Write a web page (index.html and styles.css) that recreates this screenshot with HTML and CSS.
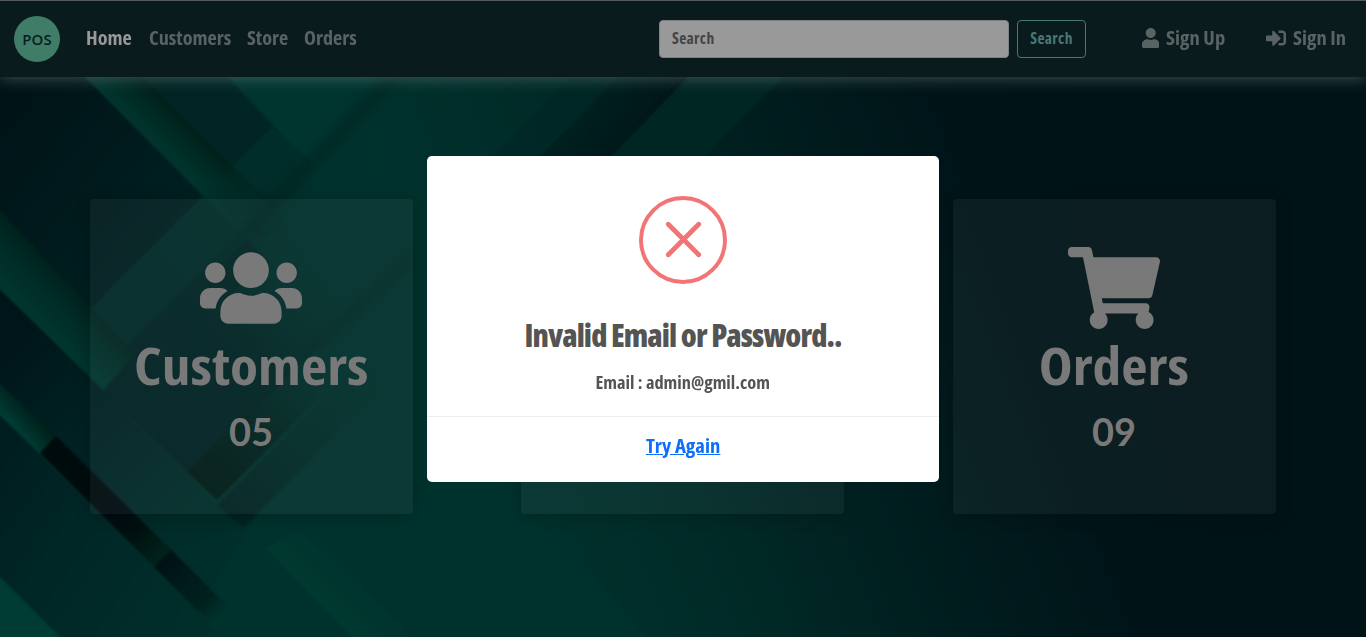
FILE: index.html
```html
<!DOCTYPE html>
<html lang="en">
<head>
<meta charset="utf-8">
<title>POS</title>
<link rel="stylesheet" href="styles.css">
</head>
<body>
<svg class="backdrop" viewBox="0 0 1366 637" preserveAspectRatio="none" aria-hidden="true">
  <defs>
    <linearGradient id="base" gradientUnits="userSpaceOnUse" x1="0" y1="0" x2="936" y2="-351">
      <stop offset="0" stop-color="#002f2b"/><stop offset=".3" stop-color="#00322d"/><stop offset=".4" stop-color="#002e2a"/><stop offset=".5" stop-color="#002926"/><stop offset=".66" stop-color="#001e1f"/><stop offset=".83" stop-color="#001519"/><stop offset="1" stop-color="#001317"/>
    </linearGradient>
    <linearGradient id="corner" gradientUnits="userSpaceOnUse" x1="0" y1="90" x2="190" y2="240">
      <stop offset="0" stop-color="#001317"/><stop offset="1" stop-color="#002122"/>
    </linearGradient>
    <linearGradient id="ray" gradientUnits="userSpaceOnUse" x1="140" y1="132" x2="172" y2="100">
      <stop offset="0" stop-color="#00352e"/><stop offset=".5" stop-color="#002a24"/><stop offset=".9" stop-color="#00201a"/><stop offset="1" stop-color="#002321"/>
    </linearGradient>
    <linearGradient id="rayend" gradientUnits="userSpaceOnUse" x1="190" y1="190" x2="240" y2="240">
      <stop offset="0" stop-color="#002e2a" stop-opacity="0"/><stop offset="1" stop-color="#002e2a"/>
    </linearGradient>
    <linearGradient id="band" gradientUnits="userSpaceOnUse" x1="50" y1="338" x2="94" y2="294">
      <stop offset="0" stop-color="#00372f"/><stop offset=".6" stop-color="#002924"/><stop offset="1" stop-color="#001d18"/>
    </linearGradient>
    <linearGradient id="band2" gradientUnits="userSpaceOnUse" x1="20" y1="434" x2="38" y2="418">
      <stop offset="0" stop-color="#003c33"/><stop offset="1" stop-color="#001f1a"/>
    </linearGradient>
    <linearGradient id="pit" gradientUnits="userSpaceOnUse" x1="0" y1="350" x2="180" y2="520">
      <stop offset="0" stop-color="#001519"/><stop offset=".4" stop-color="#002022"/><stop offset="1" stop-color="#002c29"/>
    </linearGradient>
    <linearGradient id="floor" gradientUnits="userSpaceOnUse" x1="0" y1="440" x2="240" y2="600">
      <stop offset="0" stop-color="#001d20"/><stop offset=".4" stop-color="#002726"/><stop offset="1" stop-color="#00302c"/>
    </linearGradient>
    <linearGradient id="bar" gradientUnits="userSpaceOnUse" x1="48" y1="445" x2="217" y2="614">
      <stop offset="0" stop-color="#000b0d"/><stop offset=".46" stop-color="#000d11"/><stop offset=".52" stop-color="#00110f"/><stop offset=".67" stop-color="#00231b"/><stop offset=".68" stop-color="#001114"/><stop offset=".8" stop-color="#001a1b"/><stop offset=".93" stop-color="#00221d"/><stop offset="1" stop-color="#00302c"/>
    </linearGradient>
    <linearGradient id="slash" gradientUnits="userSpaceOnUse" x1="575" y1="120" x2="640" y2="165">
      <stop offset="0" stop-color="#00201f"/><stop offset=".7" stop-color="#001819"/><stop offset="1" stop-color="#001113"/>
    </linearGradient>
    <linearGradient id="shade" gradientUnits="userSpaceOnUse" x1="150" y1="390" x2="330" y2="250">
      <stop offset="0" stop-color="#002123"/><stop offset=".45" stop-color="#002423"/><stop offset="1" stop-color="#002d2a" stop-opacity="0"/>
    </linearGradient>
    <linearGradient id="cross" gradientUnits="userSpaceOnUse" x1="130" y1="320" x2="300" y2="150">
      <stop offset="0" stop-color="#002827"/><stop offset="1" stop-color="#002e2a"/>
    </linearGradient>
    <linearGradient id="olive" gradientUnits="userSpaceOnUse" x1="190" y1="475" x2="330" y2="335">
      <stop offset="0" stop-color="#001b15"/><stop offset=".35" stop-color="#00211e"/><stop offset="1" stop-color="#002a27" stop-opacity="0"/>
    </linearGradient>
    <linearGradient id="tip" gradientUnits="userSpaceOnUse" x1="225" y1="520" x2="400" y2="345">
      <stop offset="0" stop-color="#002221"/><stop offset="1" stop-color="#002c29" stop-opacity="0"/>
    </linearGradient>
    <linearGradient id="glow" gradientUnits="userSpaceOnUse" x1="310" y1="595" x2="365" y2="540">
      <stop offset="0" stop-color="#003a31"/><stop offset="1" stop-color="#00322d" stop-opacity="0"/>
    </linearGradient>
    <filter id="soft" x="-5%" y="-5%" width="110%" height="110%" color-interpolation-filters="sRGB"><feGaussianBlur stdDeviation="1.200"/></filter>
    <filter id="hazy" x="-10%" y="-10%" width="120%" height="120%" color-interpolation-filters="sRGB"><feGaussianBlur stdDeviation="4"/></filter>
  </defs>
  <rect width="1366" height="637" fill="url(#base)"/>
  <path d="M430 430L520 500L660 650H170L280 480Z" fill="#00322d" filter="url(#soft)"/>
  <g filter="url(#soft)">
    <path d="M120 60L212 60L310 160L250 225Z" fill="#002524"/>
    <path d="M212 60H410L310 165Z" fill="#00342f"/>
    <path d="M-10 60H70L270 263L103 390L-10 290Z" fill="url(#corner)"/>
    <path d="M272 127L85 314L130 355L310 175V160Z" fill="url(#cross)"/>
    <path d="M70 62H128L275 209L250 243Z" fill="url(#ray)"/>
    <path d="M170 163L195 130L290 225L250 243Z" fill="url(#rayend)"/>
    <path d="M238 234L103 370V390L190 475L420 245L300 190Z" fill="url(#shade)"/>
    <path d="M-10 200L135 355L103 390L-10 280Z" fill="url(#band)"/>
    <path d="M-10 280L103 390L240 527L170 551L-10 375Z" fill="url(#pit)"/>
    <path d="M-10 405L225 640H-10Z" fill="url(#floor)"/>
    <path d="M-10 375L56 436L40 453L-10 406Z" fill="url(#band2)"/>
    <path d="M187 472L345 314L375 342L217 500Z" fill="url(#olive)"/>
    <path d="M217 505L412 310V359L243 528Z" fill="url(#tip)"/>
    <path d="M56 436L230 608L208 621L40 453Z" fill="url(#bar)"/>
    <path d="M-10 567L70 647H-10Z" fill="#003c33"/>
    <path d="M634 60H705L500 270H430Z" fill="url(#slash)"/>
    <path d="M705 60H800L600 260H510Z" fill="#002624"/>
    <path d="M590 60H634L500 195H455Z" fill="#002725" opacity=".7"/>
    <path d="M266 548L300 530L430 650H365Z" fill="url(#glow)"/>
  </g>
  <g filter="url(#hazy)">
    <path d="M396 60H420L250 238L235 234Z" fill="#002321" opacity=".5"/>
    <path d="M300 355L412 243V265L325 350Z" fill="#002321" opacity=".4"/>
  </g>
</svg>

<header class="navbar">
  <a class="brand">POS</a>
  <nav class="links">
    <a class="link active home">Home</a>
    <a class="link customers">Customers</a>
    <a class="link store">Store</a>
    <a class="link orders">Orders</a>
  </nav>
  <form class="search">
    <input class="field" type="text" placeholder="Search">
    <button class="go" type="button">Search</button>
  </form>
  <div class="account">
    <a class="link"><svg class="ico user" viewBox="0 0 448 512"><path d="M224 256c70.7 0 128-57.3 128-128S294.7 0 224 0 96 57.3 96 128s57.3 128 128 128zm89.6 32h-16.7c-22.2 10.2-46.9 16-72.9 16s-50.6-5.8-72.9-16h-16.7C60.2 288 0 348.2 0 422.4V464c0 26.5 21.5 48 48 48h352c26.5 0 48-21.5 48-48v-41.6c0-74.2-60.2-134.4-134.4-134.4z"/></svg><span class="signup">Sign Up</span></a>
    <a class="link"><svg class="ico enter" viewBox="0 0 512 512"><path d="M416 448h-84c-6.600 0-12-5.400-12-12v-40c0-6.600 5.400-12 12-12h84c17.700 0 32-14.300 32-32V160c0-17.700-14.300-32-32-32h-84c-6.600 0-12-5.400-12-12V76c0-6.600 5.400-12 12-12h84c53 0 96 43 96 96v192c0 53-43 96-96 96zm-47-201L201 79c-15-15-41-4.500-41 17v96H24c-13.300 0-24 10.700-24 24v96c0 13.300 10.700 24 24 24h136v96c0 21.500 26 32 41 17l168-168c9.300-9.400 9.300-24.600 0-34z"/></svg><span class="signin">Sign In</span></a>
  </div>
</header>

<main class="cards">
  <section class="card">
    <svg class="glyph users" viewBox="0 0 640 512"><path d="M96 224c35.300 0 64-28.700 64-64s-28.700-64-64-64-64 28.700-64 64 28.700 64 64 64zm448 0c35.300 0 64-28.700 64-64s-28.700-64-64-64-64 28.700-64 64 28.700 64 64 64zm32 32h-64c-17.600 0-33.500 7.100-45.100 18.600 40.300 22.100 68.900 62 75.100 109.400h66c17.700 0 32-14.300 32-32v-32c0-35.300-28.700-64-64-64zm-256 0c61.900 0 112-50.100 112-112S381.900 32 320 32 208 82.100 208 144s50.100 112 112 112zm76.800 32h-8.300c-20.800 10-43.900 16-68.500 16s-47.600-6-68.500-16h-8.300C179.600 288 128 339.600 128 403.200V432c0 26.500 21.500 48 48 48h288c26.500 0 48-21.500 48-48v-28.800c0-63.600-51.600-115.200-115.200-115.200zm-223.700-13.400C161.500 263.100 145.600 256 128 256H64c-35.300 0-64 28.700-64 64v32c0 17.700 14.300 32 32 32h65.900c6.300-47.400 34.900-87.300 75.200-109.400z"/></svg>
    <h2 class="title">Customers</h2>
    <p class="count">05</p>
  </section>
  <section class="card"></section>
  <section class="card">
    <svg class="glyph cart" viewBox="0 0 576 512"><path d="M528.12 301.319l47.273-208C578.806 78.301 567.391 64 551.99 64H159.208l-9.166-44.81C147.758 8.021 137.93 0 126.529 0H24C10.745 0 0 10.745 0 24v16c0 13.255 10.745 24 24 24h69.883l70.248 343.435C147.325 417.1 136 435.222 136 456c0 30.928 25.072 56 56 56s56-25.072 56-56c0-15.674-6.447-29.835-16.824-40h209.647C430.447 426.165 424 440.326 424 456c0 30.928 25.072 56 56 56s56-25.072 56-56c0-22.172-12.888-41.332-31.579-50.405l5.517-24.276c3.413-15.018-8.002-29.319-23.403-29.319H218.117l-6.545-32h293.145c11.206 0 20.92-7.754 23.403-18.681z"/></svg>
    <h2 class="title">Orders</h2>
    <p class="count">09</p>
  </section>
</main>

<div class="overlay">
  <div class="modal">
    <svg class="error" viewBox="0 0 88 88"><circle cx="44" cy="44" r="42"/><path d="M29.300 28.300L59.700 58.700M59.700 28.300L29.300 58.700"/></svg>
    <h1 class="heading">Invalid Email or Password..</h1>
    <p class="detail">Email : admin@gmil.com</p>
    <div class="footer"><a class="retry">Try Again</a></div>
  </div>
</div>
</body>
</html>
```
FILE: styles.css
```css
* { box-sizing: border-box; }
body {
  margin: 0;
  width: 1366px;
  height: 637px;
  overflow: hidden;
  background: #001216;
  font-family: "Open Sans", "Noto Sans", sans-serif;
  font-weight: 700;
  font-stretch: 75%;
}
.backdrop { position: absolute; inset: 0; width: 1366px; height: 637px; z-index: -1; }

.navbar {
  display: flex;
  align-items: center;
  height: 77px;
  padding: 0 20px 0 14px;
  background: #0a1b1e;
  border-top: 1px solid #555b5b;
  box-shadow: 0 2px 14px rgba(125, 145, 145, .45);
}
.brand {
  display: flex;
  align-items: center;
  justify-content: center;
  width: 46px;
  height: 46px;
  border-radius: 50%;
  background: #3f7d69;
  color: #0a1b1e;
  font-size: 15px;
  font-weight: 600;
  font-stretch: 100%;
}
.links { display: flex; gap: 16px; margin-left: 26px; }
.link { display: flex; align-items: center; font-size: 19px; line-height: 28px; padding-bottom: 2px; color: #596364; white-space: nowrap; }
.links .link { transform: scaleX(1.060); transform-origin: left; }
.links .active { color: #999; }
.home { width: 46.500px; }
.customers { width: 82px; }
.store { width: 41px; }
.orders { width: 53.500px; }
.search { display: flex; gap: 8px; margin-left: 302px; }
.field, .go { height: 38px; border-radius: 4px; padding: 0 12px 2px; font: inherit; font-size: 15.500px; font-stretch: 75%; letter-spacing: .35px; }
.field { width: 350px; background: #999; border: 1px solid #7d8184; }
.field::placeholder { color: #414548; opacity: 1; }
.go { width: 69px; padding: 0 0 2px; background: none; border: 1px solid #4a7773; color: #4a7773; }
.account { display: flex; margin-left: auto; gap: 40px; }
.ico { height: 20px; fill: #596364; }
.user { width: 17.500px; margin-right: 7px; }
.enter { width: 20px; margin-right: 7px; }
.signup, .signin { transform: scaleX(1.080); transform-origin: left; }
.signup { width: 60px; }
.signin { width: 53px; }

.cards { display: grid; grid-template-columns: repeat(3, 323px); gap: 108.500px; padding: 122px 0 0 89.500px; }
.card {
  display: flex;
  flex-direction: column;
  align-items: center;
  height: 315px;
  padding-top: 48px;
  border-radius: 4px;
  background: rgba(255, 255, 255, .042);
  box-shadow: 0 2px 16px rgba(0, 0, 0, .22);
  color: #797979;
}
.glyph { height: 82px; fill: #797979; flex: none; }
.users { width: 102px; }
.cart { width: 92px; }
.title { margin: -1px 0 1px; font-size: 51px; line-height: 74px; font-weight: 700; transform: scaleX(1.125); }
.count { margin: 0; font-family: Lato, sans-serif; font-size: 38px; line-height: 56px; font-weight: 700; }

.overlay { position: absolute; inset: 0; display: flex; justify-content: center; align-items: center; }
.modal {
  display: flex;
  flex-direction: column;
  align-items: center;
  width: 512px;
  height: 326px;
  padding-top: 40px;
  border-radius: 5px;
  background: #fff;
  color: #545454;
}
.error { width: 88px; height: 88px; fill: none; stroke: #f27474; stroke-width: 4; }
.error path { stroke-width: 4.800; stroke-linecap: round; }
.heading { margin: 29px 0 0; font-size: 31px; line-height: 44px; font-weight: 800; letter-spacing: -.920px; }
.detail { margin: 13px 0 0; font-size: 17px; line-height: 26px; transform: scaleX(1.080); }
.footer { align-self: stretch; margin-top: 20px; padding-top: 13px; border-top: 1px solid #eee; text-align: center; }
.retry { display: inline-block; color: #0d6efd; font-size: 19px; line-height: 32px; text-decoration: underline; transform: scaleX(1.090); }
```
